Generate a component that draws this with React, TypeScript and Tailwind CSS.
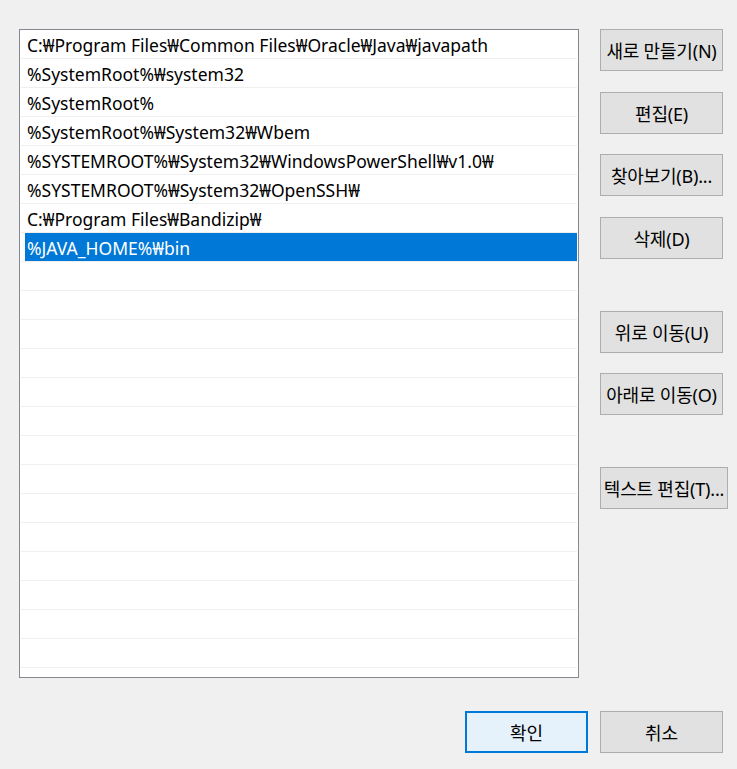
const paths = [
  "C:₩Program Files₩Common Files₩Oracle₩Java₩javapath",
  "%SystemRoot%₩system32",
  "%SystemRoot%",
  "%SystemRoot%₩System32₩Wbem",
  "%SYSTEMROOT%₩System32₩WindowsPowerShell₩v1.0₩",
  "%SYSTEMROOT%₩System32₩OpenSSH₩",
  "C:₩Program Files₩Bandizip₩",
  "%JAVA_HOME%₩bin",
];

const SELECTED = 7;
const ROW_COUNT = 23;

function Btn({ label, className = "" }: { label: string; className?: string }) {
  return (
    <button
      className={`h-[42px] w-[123px] border border-[#adadad] bg-[#e1e1e1] pt-[1px] text-[18px] leading-none text-black whitespace-nowrap tracking-[-0.2px] ${className}`}
    >
      {label}
    </button>
  );
}

export default function App() {
  const rows = Array.from({ length: ROW_COUNT }, (_, i) => paths[i] ?? "");

  return (
    <div
      className="w-[737px] h-[769px] bg-[#f0f0f0] overflow-hidden"
      style={{ fontFamily: '"Noto Sans", "Noto Sans CJK KR", sans-serif' }}
    >
      <div className="flex pt-[29px] pl-[19px]">
        {/* path list */}
        <div className="w-[560px] h-[649px] border border-[#828790] bg-white overflow-hidden">
          {rows.map((p, i) => (
            <div key={i} className="mx-[1px] h-[29px] border-b border-[#efefef]">
              {i === SELECTED ? (
                <div className="ml-[4px] h-full bg-[#0078d7] pl-[2px] pt-[3px] flex items-center text-[17.5px] text-white whitespace-nowrap">
                  {p}
                </div>
              ) : (
                <div className="pl-[6px] pt-[3px] h-full flex items-center text-[17.5px] text-black whitespace-nowrap">
                  {p}
                </div>
              )}
            </div>
          ))}
        </div>

        {/* side buttons */}
        <div className="ml-[21px] flex flex-col items-start">
          <Btn label="새로 만들기(N)" />
          <Btn label="편집(E)" className="mt-[21px]" />
          <Btn label="찾아보기(B)..." className="mt-[20px]" />
          <Btn label="삭제(D)" className="mt-[21px]" />
          <Btn label="위로 이동(U)" className="mt-[52px]" />
          <Btn label="아래로 이동(O)" className="mt-[20px]" />
          <Btn label="텍스트 편집(T)..." className="mt-[52px] w-[128px]" />
        </div>
      </div>

      {/* dialog buttons */}
      <div className="flex pt-[33px] pl-[465px] gap-[12px]">
        <button className="h-[42px] w-[123px] border-2 border-[#0078d7] bg-[#e5f1fb] pt-[1px] text-[18px] leading-none text-black">
          확인
        </button>
        <button className="h-[42px] w-[123px] border border-[#adadad] bg-[#e1e1e1] pt-[1px] text-[18px] leading-none text-black">
          취소
        </button>
      </div>
    </div>
  );
}
